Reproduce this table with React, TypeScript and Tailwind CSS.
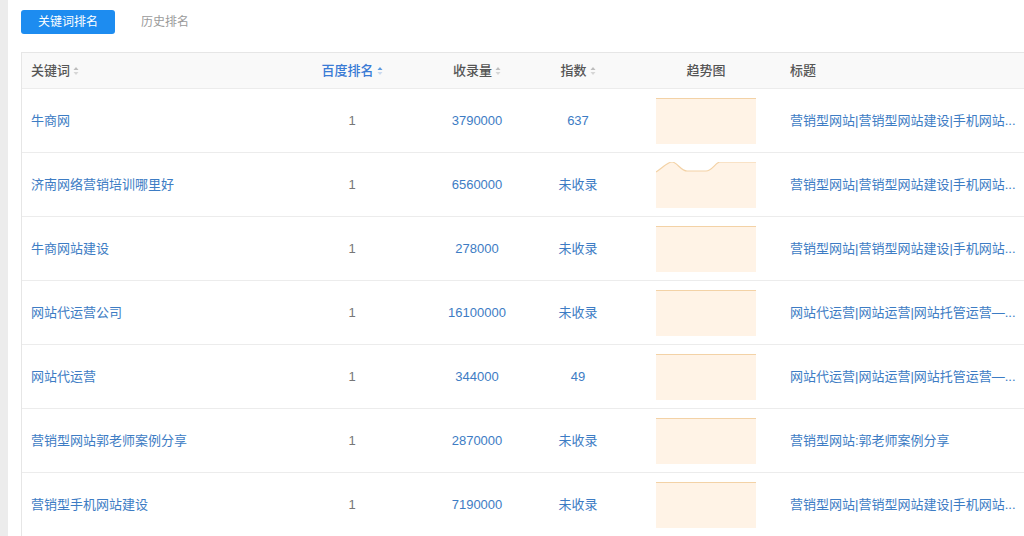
import React from 'react';

type Row = {
  keyword: string;
  rank: number;
  indexed: string;
  score: string;
  title: string;
  trend?: boolean;
};

const rows: Row[] = [
  { keyword: '牛商网', rank: 1, indexed: '3790000', score: '637', title: '营销型网站|营销型网站建设|手机网站...' },
  { keyword: '济南网络营销培训哪里好', rank: 1, indexed: '6560000', score: '未收录', title: '营销型网站|营销型网站建设|手机网站...', trend: true },
  { keyword: '牛商网站建设', rank: 1, indexed: '278000', score: '未收录', title: '营销型网站|营销型网站建设|手机网站...' },
  { keyword: '网站代运营公司', rank: 1, indexed: '16100000', score: '未收录', title: '网站代运营|网站运营|网站托管运营—...' },
  { keyword: '网站代运营', rank: 1, indexed: '344000', score: '49', title: '网站代运营|网站运营|网站托管运营—...' },
  { keyword: '营销型网站郭老师案例分享', rank: 1, indexed: '2870000', score: '未收录', title: '营销型网站:郭老师案例分享' },
  { keyword: '营销型手机网站建设', rank: 1, indexed: '7190000', score: '未收录', title: '营销型网站|营销型网站建设|手机网站...' },
];

const cols = 'grid grid-cols-[269px_122px_128px_74px_166px_250px]';

function SortIcon({ active }: { active?: boolean }) {
  return (
    <svg width="6" height="10" viewBox="0 0 6 10" className="ml-[3px] mt-[1px]">
      <path d="M3 1 L5.5 4 H0.5 Z" fill={active ? '#5b9be0' : '#bdbdbd'} />
      <path d="M3 9 L5.5 6 H0.5 Z" fill={active ? '#c9d9ef' : '#d6d6d6'} />
    </svg>
  );
}

function Trend({ wave }: { wave?: boolean }) {
  const line = wave
    ? 'M0 10 C6 6 12 0 16 0 C21 0 25 9 31 9 L50 9 C56 9 60 0 64 0 L100 0'
    : 'M0 0.5 L100 0.5';
  return (
    <svg width="100" height="46" viewBox="0 0 100 46" className="block">
      <path d={`${line} L100 46 L0 46 Z`} fill="#fff3e6" />
      <path d={line} fill="none" stroke="#f3d2a6" strokeWidth="1.2" />
    </svg>
  );
}

export default function App() {
  return (
    <div
      className="flex h-[536px] w-[1024px] overflow-hidden bg-white text-[13px]"
      style={{ fontFamily: '"Liberation Sans", "Noto Sans CJK SC", sans-serif' }}
    >
      <div className="w-[8px] shrink-0 bg-[#ececec]" />
      <div className="flex-1 pl-[13px] pt-[10px]">
        {/* tabs */}
        <div className="flex items-center text-[12px]">
          <div className="flex h-[24px] w-[94px] items-center justify-center rounded-[3px] bg-[#1d8cf0] text-white">
            关键词排名
          </div>
          <div className="ml-[26px] text-[#9a9a9a]">历史排名</div>
        </div>

        {/* table */}
        <div className="mt-[18px] w-[1020px] border-l border-t border-[#e6e6e6]">
          <div className={`${cols} h-[36px] items-center border-b border-[#ececec] bg-[#f9f9f9] font-medium text-[#555]`}>
            <div className="flex items-center pl-[9px]">
              关键词<SortIcon />
            </div>
            <div className="flex items-center justify-center text-[#3a7bd5]">
              百度排名<SortIcon active />
            </div>
            <div className="flex items-center justify-center">
              收录量<SortIcon />
            </div>
            <div className="flex items-center justify-center">
              指数<SortIcon />
            </div>
            <div className="pl-[41px]">
              <div className="w-[100px] text-center">趋势图</div>
            </div>
            <div className="pl-[9px]">标题</div>
          </div>

          {rows.map((r) => (
            <div
              key={r.keyword}
              className={`${cols} h-[64px] items-center border-b border-[#ececec] text-[#3d7cc4]`}
            >
              <div className="pl-[9px]">{r.keyword}</div>
              <div className="text-center text-[#777]">{r.rank}</div>
              <div className="text-center">{r.indexed}</div>
              <div className="text-center">{r.score}</div>
              <div className="pl-[41px]">
                <Trend wave={r.trend} />
              </div>
              <div className="whitespace-nowrap pl-[9px]">{r.title}</div>
            </div>
          ))}
        </div>
      </div>
    </div>
  );
}
